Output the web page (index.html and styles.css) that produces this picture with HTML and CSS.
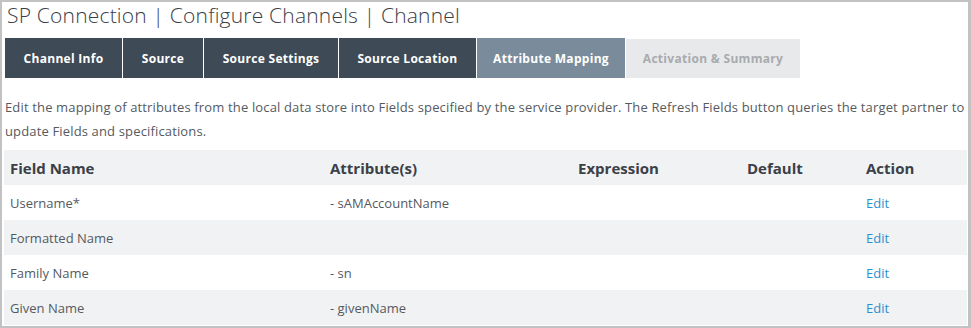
FILE: index.html
```html
<!DOCTYPE html>
<html>
<head>
<meta charset="utf-8">
<link rel="stylesheet" href="styles.css">
</head>
<body>
<div class="frame">
  <h1 class="title">SP Connection | Configure Channels | Channel</h1>
  <nav class="tabs">
    <div class="tab tab-info">Channel Info</div>
    <div class="tab tab-source">Source</div>
    <div class="tab tab-settings">Source Settings</div>
    <div class="tab tab-location">Source Location</div>
    <div class="tab tab-mapping active">Attribute Mapping</div>
    <div class="tab tab-summary disabled">Activation &amp; Summary</div>
  </nav>
  <p class="desc">Edit the mapping of attributes from the local data store into Fields specified by the service provider. The Refresh Fields button queries the target partner to update Fields and specifications.</p>
  <div class="table">
    <div class="row head">
      <div>Field Name</div><div>Attribute(s)</div><div>Expression</div><div>Default</div><div>Action</div>
    </div>
    <div class="row">
      <div>Username*</div><div>- sAMAccountName</div><div></div><div></div><div><a class="edit">Edit</a></div>
    </div>
    <div class="row alt">
      <div>Formatted Name</div><div></div><div></div><div></div><div><a class="edit">Edit</a></div>
    </div>
    <div class="row">
      <div>Family Name</div><div>- sn</div><div></div><div></div><div><a class="edit">Edit</a></div>
    </div>
    <div class="row alt">
      <div>Given Name</div><div>- givenName</div><div></div><div></div><div><a class="edit">Edit</a></div>
    </div>
  </div>
</div>
</body>
</html>
```

FILE: styles.css
```css
html, body {
  margin: 0;
  padding: 0;
  background: #ffffff;
}
.frame {
  box-sizing: border-box;
  width: 971px;
  height: 328px;
  border-top: 2px solid #c2c2c2;
  border-left: 2px solid #c2c2c2;
  border-right: 3px solid #c2c2c2;
  border-bottom: 2px solid #c2c2c2;
  font-family: "Open Sans", "Liberation Sans", sans-serif;
  color: #555a5f;
  overflow: hidden;
}
.title {
  margin: 0;
  padding: 0 0 0 5px;
  height: 36px;
  font-size: 21px;
  font-weight: 300;
  letter-spacing: 0.2px;
  color: #3b4047;
  line-height: 27px;
}
.tabs {
  display: flex;
  gap: 1px;
  margin-left: 3px;
  height: 40px;
}
.tab {
  display: flex;
  align-items: center;
  justify-content: center;
  background: #3e4b57;
  color: #ffffff;
  font-size: 12px;
  font-weight: 700;
  letter-spacing: 0.3px;
  white-space: nowrap;
}
.tab-info { width: 117px; }
.tab-source { width: 80px; }
.tab-settings { width: 134px; }
.tab-location { width: 137px; }
.tab-mapping { width: 148px; }
.tab-summary { width: 174px; }
.tab.active {
  background: #7a8b9c;
}
.tab.disabled {
  background: #e8e9eb;
  color: #a9abae;
  margin-top: 1px;
}
.desc {
  margin: 17px 0 0 3px;
  font-size: 13px;
  letter-spacing: 0.15px;
  line-height: 24px;
  color: #555a5f;
  height: 55px;
}
.table {
  margin-left: 2px;
  width: 963px;
}
.row {
  display: grid;
  grid-template-columns: 320px 248px 169px 119px 107px;
  height: 35px;
  align-items: center;
  font-size: 13px;
}
.row > div {
  padding-left: 6px;
}
.row.head {
  background: #f1f2f4;
  font-size: 15px;
  font-weight: 700;
  color: #3b4047;
}
.row.alt {
  background: #f1f2f4;
}
.edit {
  color: #2a90cf;
  text-decoration: none;
}
```
